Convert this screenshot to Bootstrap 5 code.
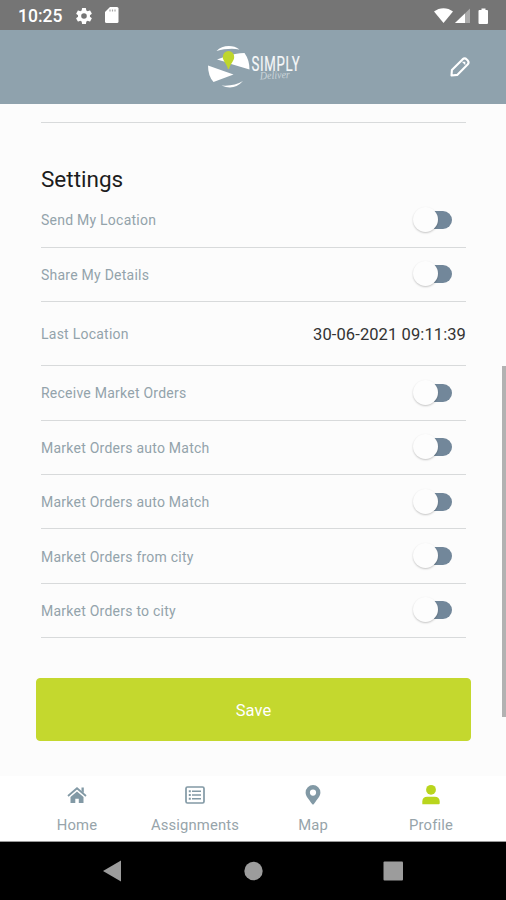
<!DOCTYPE html>
<html lang="en">
<head>
<meta charset="utf-8">
<meta name="viewport" content="width=device-width, initial-scale=1">
<title>Profile settings</title>
<link href="https://cdn.jsdelivr.net/npm/bootstrap@5.3.0/dist/css/bootstrap.min.css" rel="stylesheet">
<style>
body{font-family:Roboto,"Liberation Sans",sans-serif;background:#fcfcfc;color:#222;height:900px;overflow:hidden}
svg{display:block;flex:none}
.status{height:30px;background:#757575;padding:1px 17px 0 18px}
.clock{font-size:17.5px;font-weight:500;line-height:30px;width:58px}
.sd-card{margin-left:13px}
.topbar{height:74px;background:#8fa2ad;padding-right:35px}
.brand-logo{left:200px;top:8px}
.content{height:672px;padding:0 35px 0 36px}
.inner{padding:0 5px}
.rule{height:19px}
.rule,.setting{border-bottom:1px solid #d8dadb}
.heading{font-size:22.5px;font-weight:400;line-height:30px;margin:41px 0 0;color:#1c1c1c}
.setting{height:54.4px;font-size:14px;letter-spacing:.24px;color:#93a3ab}
.setting span:first-child{padding-top:2px}
.setting.first{height:53.800px}
.setting.first span:first-child{padding-top:1px}
.setting.tall{height:64px}
.setting .date{font-size:16.5px;letter-spacing:.1px;color:#333;padding-top:3px}
.toggle{width:38px;height:18px;border-radius:9px;background:#72879a;margin-right:14px}
.toggle::before{content:"";display:block;width:25px;height:25px;border-radius:50%;background:#fdfdfd;box-shadow:0 1px 2px rgba(0,0,0,.22);margin:-4px 0 0 -1px}
.save{--bs-btn-bg:#c4d82e;--bs-btn-color:#fff;--bs-btn-border-color:#c4d82e;height:63px;margin-top:40.200px;border-radius:4px;font-size:16.5px;letter-spacing:.1px;padding-top:9px}
.thumb{right:0;top:366px;width:4px;height:351px;background:#b2b2b2}
.tabs{height:66px;background:#fff;padding:0 16px 0 18px;border-bottom:1px solid #999}
.tab{font-size:14.8px;letter-spacing:.15px;color:#97a4aa;line-height:20px;padding-top:8px;gap:9px}
.keys{height:58px;background:#000}
</style>
</head>
<body class="position-relative">
<header>
  <div class="status d-flex align-items-center text-white">
    <span class="clock">10:25</span>
    <svg width="16" height="16" viewBox="2 2 20 20" fill="#fff"><path d="M19.4 13a7.800 7.800 0 0 0 0-2l2.100-1.650a.5.5 0 0 0 .12-.64l-2-3.460a.5.5 0 0 0-.61-.22l-2.490 1a7.300 7.300 0 0 0-1.690-.98l-.38-2.650A.5.5 0 0 0 14 2h-4a.5.5 0 0 0-.49.42l-.38 2.650c-.61.25-1.170.58-1.690.98l-2.490-1a.5.5 0 0 0-.61.22l-2 3.460a.5.5 0 0 0 .12.64L4.570 11a7.900 7.900 0 0 0 0 2l-2.110 1.650a.5.5 0 0 0-.12.64l2 3.460c.12.22.39.3.61.22l2.490-1c.52.4 1.080.73 1.690.98l.38 2.650c.04.24.25.4.49.4h4c.25 0 .46-.18.49-.42l.38-2.650c.61-.25 1.170-.59 1.690-.98l2.490 1c.23.09.49 0 .61-.22l2-3.460a.5.5 0 0 0-.12-.64zM12 15.500a3.500 3.500 0 1 1 0-7 3.500 3.500 0 0 1 0 7z"/></svg>
    <svg class="ms-auto order-3" width="55" height="18" viewBox="0 0 55 18"><path d="M0 4.500C5.500 0 13.500 0 19 4.500L9.500 16z" fill="#fff"/><path d="M36 1.500V16H21z" fill="#aaa"/><path d="M31 6.500V16H21z" fill="#fff"/><path d="M47.500 1.500h4v1.500H53q1 0 1 1V16q0 1-1 1h-7.500q-1 0-1-1V4q0-1 1-1h2z" fill="#fff"/></svg>
    <svg class="sd-card order-1" width="14" height="17" viewBox="0 0 14 17"><path d="M5 0h7q1.500 0 1.500 1.500v13q0 1.500-1.500 1.500H1.500Q0 16 0 14.500V5z" fill="#fff"/><path d="M5 2.500v2M7.500 2.500v2M10 2.500v2" stroke="#a5a5a5" stroke-width="1.200"/></svg>
  </div>
  <div class="topbar position-relative d-flex align-items-center justify-content-end">
    <svg class="brand-logo position-absolute" width="106" height="56" viewBox="200 38 106 56">
      <g fill="#fff"><path d="M216.500 51C222 45 233 44.500 239.500 49.500 232 48 224 49 216.500 51z"/><path d="M217 59.500L224 57Q236 53 244.500 53Q249.500 60 249.500 69.500L231 64Q224 61 217 59.500z"/><path d="M208 65.500L233.500 74.500L213.500 82Q208 76 208 65.500z"/><path d="M221.500 85.500Q234 86.500 243 81Q234 91 221.500 85.500z"/></g>
      <path d="M228.500 51a5.700 5.700 0 0 1 5.700 5.900c0 4-3.700 6.500-5.200 12h-1c-1.500-5.500-5.200-8-5.200-12a5.700 5.700 0 0 1 5.700-5.900z" fill="#bfd62b"/>
      <text transform="translate(251.500 71) scale(.66 1)" font-family="Roboto,sans-serif" font-size="20" fill="#f6f8f9" stroke="#f6f8f9" stroke-width=".2" textLength="73">SIMPLY</text>
      <text transform="translate(260 79.500) rotate(-3)" font-family="'Liberation Serif',serif" font-style="italic" font-size="11" fill="#cbd5da" textLength="30" lengthAdjust="spacingAndGlyphs">Deliver</text>
    </svg>
    <svg width="22" height="22" viewBox="0 0 22 22" fill="none" stroke="#fff" stroke-width="2.100" stroke-linejoin="round"><path d="M2.500 19.500L2.900 14 13.500 3.400Q15.700 1.500 17.700 3.400L18.700 4.400Q20.500 6.500 18.600 8.600L8.200 18.900z"/><path d="M12.800 5.800L16.300 9.300V5.800z" fill="#fff" stroke="none"/></svg>
  </div>
</header>
<main class="content">
  <div class="inner">
    <div class="rule"></div>
    <h1 class="heading">Settings</h1>
    <div class="setting first d-flex align-items-center justify-content-between"><span>Send My Location</span><span class="toggle"></span></div>
    <div class="setting d-flex align-items-center justify-content-between"><span>Share My Details</span><span class="toggle"></span></div>
    <div class="setting tall d-flex align-items-center justify-content-between"><span>Last Location</span><span class="date">30-06-2021 09:11:39</span></div>
    <div class="setting d-flex align-items-center justify-content-between"><span>Receive Market Orders</span><span class="toggle"></span></div>
    <div class="setting d-flex align-items-center justify-content-between"><span>Market Orders auto Match</span><span class="toggle"></span></div>
    <div class="setting d-flex align-items-center justify-content-between"><span>Market Orders auto Match</span><span class="toggle"></span></div>
    <div class="setting d-flex align-items-center justify-content-between"><span>Market Orders from city</span><span class="toggle"></span></div>
    <div class="setting d-flex align-items-center justify-content-between"><span>Market Orders to city</span><span class="toggle"></span></div>
  </div>
  <button class="btn save w-100" type="button">Save</button>
</main>
<div class="thumb position-absolute"></div>
<nav class="tabs row g-0">
  <div class="tab col d-flex flex-column align-items-center">
    <svg width="20" height="22" viewBox="0 0 20 22"><path d="M1 12L10 4.300 19 12" fill="none" stroke="#8299a5" stroke-width="1.800"/><path d="M14.500 3.500h2.300V9l-2.300-2z" fill="#8299a5"/><path d="M10 7.500l6.500 5.400V19h-4.700v-4.300H8.300V19H3.500v-6.100z" fill="#8299a5"/></svg>
    <span>Home</span>
  </div>
  <div class="tab col d-flex flex-column align-items-center">
    <svg width="20" height="22" viewBox="0 0 20 22" fill="none" stroke="#8299a5"><rect x="1" y="3" width="18" height="16" rx="1.500" stroke-width="1.700"/><path d="M7 7.200h9M7 11h9M7 14.800h9" stroke-width="1.400"/><path d="M3.800 7.200h2M3.800 11h2M3.800 14.800h2" stroke-width="1.900"/></svg>
    <span>Assignments</span>
  </div>
  <div class="tab col d-flex flex-column align-items-center">
    <svg width="20" height="22" viewBox="0 0 20 22"><path fill="#8299a5" fill-rule="evenodd" d="M10 1a7.400 7.400 0 0 1 7.400 7.400C17.400 12 15 14 10.700 20.200q-.7.700-1.400 0C5 14 2.600 12 2.600 8.400A7.400 7.400 0 0 1 10 1zm0 4.500a3.100 3.100 0 1 0 0 6.200 3.100 3.100 0 0 0 0-6.200z"/></svg>
    <span>Map</span>
  </div>
  <div class="tab col d-flex flex-column align-items-center">
    <svg width="20" height="22" viewBox="0 0 20 22" fill="#b9d51d"><circle cx="10" cy="5.800" r="4.900"/><path d="M1.300 20.200v-2.500q0-5 5-5h7.400q5 0 5 5v1.500q0 1-1 1z"/></svg>
    <span>Profile</span>
  </div>
</nav>
<footer class="keys">
  <svg width="506" height="58" viewBox="0 842 506 58" fill="#9c9c9c"><path d="M103 871L121 860.500V881.500z"/><circle cx="253.500" cy="871" r="9.200"/><rect x="383.500" y="861.500" width="19.500" height="19" rx="1"/></svg>
</footer>
<script src="https://cdn.jsdelivr.net/npm/bootstrap@5.3.0/dist/js/bootstrap.bundle.min.js"></script>
</body>
</html>
